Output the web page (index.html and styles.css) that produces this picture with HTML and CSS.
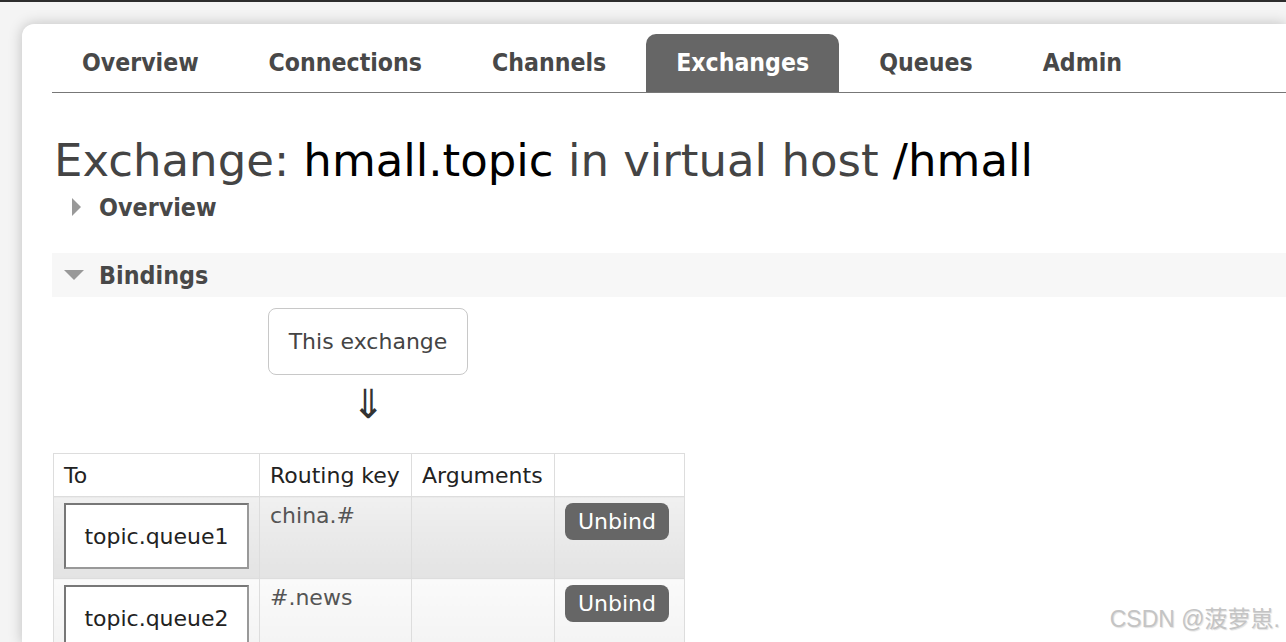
FILE: index.html
```html
<!DOCTYPE html>
<html>
<head>
<meta charset="utf-8">
<link rel="stylesheet" href="styles.css">
</head>
<body>
<div class="topbar"></div>
<div class="page">
  <div class="card">
    <ul class="nav">
      <li class="tab">Overview</li>
      <li class="tab">Connections</li>
      <li class="tab">Channels</li>
      <li class="tab active">Exchanges</li>
      <li class="tab">Queues</li>
      <li class="tab">Admin</li>
    </ul>
    <h1 class="title">Exchange: <b>hmall.topic</b> in virtual host <b>/hmall</b></h1>
    <div class="section collapsed">
      <span class="tri tri-right"></span><span class="sec-label">Overview</span>
    </div>
    <div class="section open">
      <span class="tri tri-down"></span><span class="sec-label">Bindings</span>
    </div>
    <div class="flow">
      <div class="this-ex">This exchange</div>
      <div class="arrow">⇓</div>
    </div>
    <table class="bindings">
      <thead>
        <tr><th class="c-to">To</th><th class="c-rk">Routing key</th><th class="c-args">Arguments</th><th class="c-act"></th></tr>
      </thead>
      <tbody>
        <tr class="alt1">
          <td class="c-to"><span class="qbox">topic.queue1</span></td>
          <td class="c-rk">china.#</td>
          <td class="c-args"></td>
          <td class="c-act"><span class="btn">Unbind</span></td>
        </tr>
        <tr class="alt2">
          <td class="c-to"><span class="qbox">topic.queue2</span></td>
          <td class="c-rk">#.news</td>
          <td class="c-args"></td>
          <td class="c-act"><span class="btn">Unbind</span></td>
        </tr>
      </tbody>
    </table>
  </div>
</div>
<div class="watermark">CSDN @菠萝崽.</div>
</body>
</html>
```
FILE: styles.css
```css
html, body {
  margin: 0;
  padding: 0;
  height: 100%;
  overflow: hidden;
  background: #f4f4f4;
}
body {
  font-family: "DejaVu Sans", Verdana, sans-serif;
  color: #444;
}
.topbar {
  height: 2px;
  background: #2d2d2d;
}
.page {
  padding: 22px 0 0 22px;
  height: 100%;
  box-sizing: border-box;
}
.card {
  background: #fff;
  border-radius: 12px 0 0 0;
  box-shadow: 0 0 14px rgba(0, 0, 0, 0.22);
  height: 100%;
  padding: 10px 0 0 30px;
  box-sizing: border-box;
}
.nav {
  list-style: none;
  margin: 0;
  padding: 0;
  display: flex;
  gap: 10px;
  border-bottom: 1px solid #777;
}
.tab {
  padding: 0 30px;
  height: 58px;
  line-height: 58px;
  font-family: "DejaVu Sans Condensed", "DejaVu Sans", sans-serif;
  font-weight: bold;
  font-size: 24.6px;
  color: #484848;
  border-radius: 10px 10px 0 0;
}
.tab.active {
  background: #666;
  color: #fff;
}
.title {
  margin: 42px 0 0 2px;
  font-weight: normal;
  font-size: 45px;
  line-height: 52px;
  color: #444;
}
.title b {
  font-weight: normal;
  color: #000;
}
.section {
  display: flex;
  align-items: center;
  height: 44px;
  font-family: "DejaVu Sans Condensed", "DejaVu Sans", sans-serif;
  font-weight: bold;
  font-size: 24.8px;
  color: #484848;
}
.section.collapsed {
  margin-top: -2px;
  padding-left: 20px;
}
.section.open {
  margin-top: 24px;
  background: #f7f7f7;
  padding-left: 12px;
}
.tri {
  display: inline-block;
  width: 0;
  height: 0;
}
.tri-right {
  border-top: 9px solid transparent;
  border-bottom: 9px solid transparent;
  border-left: 9px solid #999;
  margin-right: 18px;
}
.tri-down {
  border-left: 10px solid transparent;
  border-right: 10px solid transparent;
  border-top: 10px solid #999;
  margin-right: 15px;
}
.flow {
  display: flex;
  flex-direction: column;
  align-items: center;
  width: 200px;
  margin: 11px 0 0 216px;
}
.this-ex {
  width: 200px;
  height: 67px;
  box-sizing: border-box;
  border: 1px solid #c8c8c8;
  border-radius: 8px;
  display: flex;
  align-items: center;
  justify-content: center;
  font-size: 22px;
  color: #444;
}
.arrow {
  font-size: 40px;
  line-height: 44px;
  margin-top: 7px;
  color: #333;
}
.bindings {
  margin: 27px 0 0 1px;
  border-collapse: collapse;
  font-size: 22px;
}
.bindings th, .bindings td {
  border: 1px solid #ddd;
  text-align: left;
  vertical-align: top;
  font-weight: normal;
  padding: 0 10px;
}
.bindings th {
  height: 42px;
  vertical-align: middle;
  color: #222;
  background: #fff;
}
.bindings td {
  padding-top: 6px;
  padding-bottom: 9px;
  color: #555;
}
.c-to { width: 185px; }
.c-rk { width: 131px; }
.c-args { width: 122px; }
.c-act { width: 109px; }
.alt1 td { background: linear-gradient(#f0f0f0, #e3e3e3); }
.alt2 td { background: linear-gradient(#fafafa, #f2f2f2); }
.qbox {
  display: flex;
  align-items: center;
  justify-content: center;
  height: 66px;
  box-sizing: border-box;
  border: 2px solid #888;
  border-color: #777 #999 #999 #777;
  background: #fff;
  color: #222;
}
.btn {
  display: inline-block;
  background: #666;
  color: #fff;
  border-radius: 8px;
  padding: 0 13px;
  height: 37px;
  line-height: 37px;
}
.watermark {
  position: absolute;
  right: 6px;
  bottom: 8px;
  font-family: "Liberation Sans", "Noto Sans CJK SC", sans-serif;
  font-size: 23px;
  color: #c4c4c4;
  text-shadow: 1px 1px 1px rgba(0,0,0,0.12);
}
```
